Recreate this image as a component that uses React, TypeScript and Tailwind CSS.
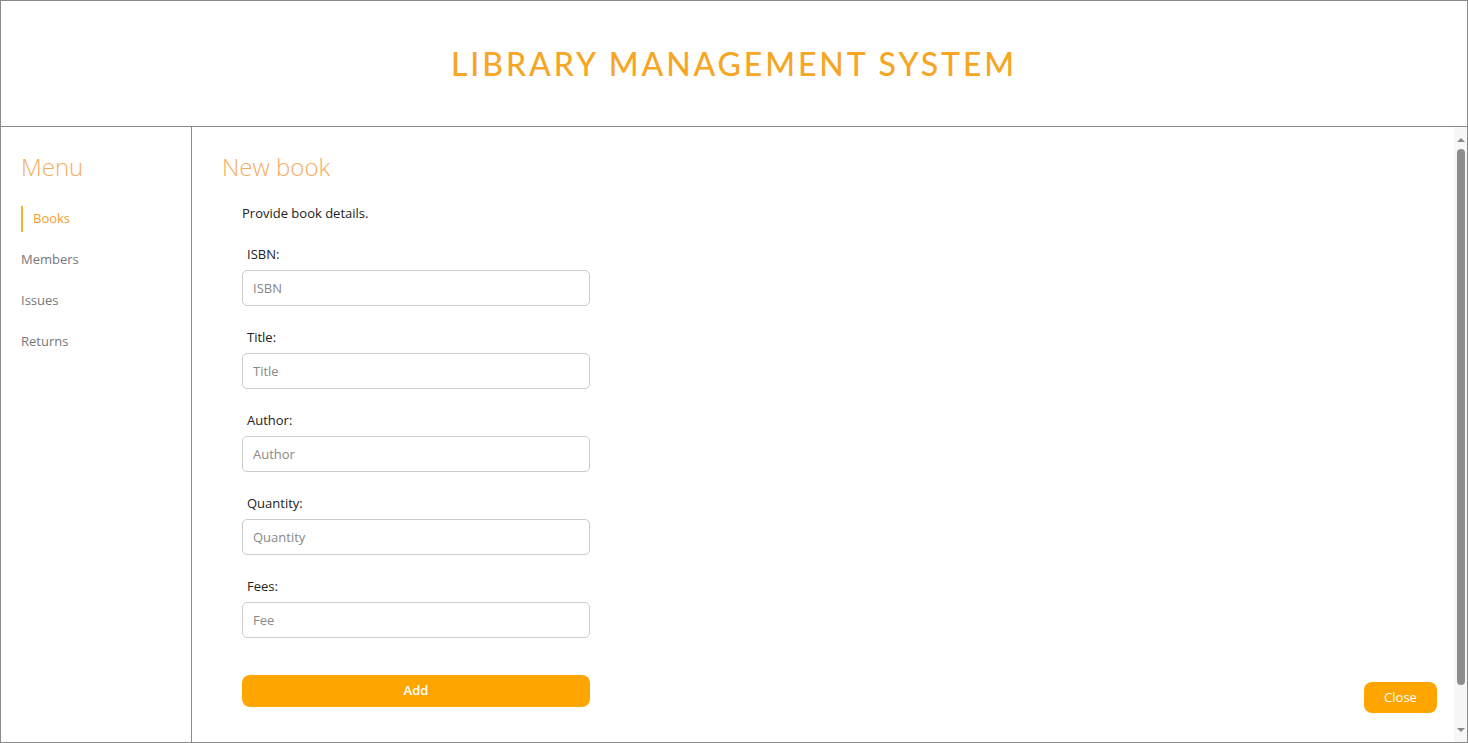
const fields = [
  { label: "ISBN:", placeholder: "ISBN" },
  { label: "Title:", placeholder: "Title" },
  { label: "Author:", placeholder: "Author" },
  { label: "Quantity:", placeholder: "Quantity" },
  { label: "Fees:", placeholder: "Fee" },
];

const menu = ["Books", "Members", "Issues", "Returns"];

function Scrollbar() {
  return (
    <div className="flex w-[13px] shrink-0 flex-col items-center bg-[#f7f7f7] pt-[11px] pb-[10px]">
      <div className="h-0 w-0 border-x-[4px] border-b-[4px] border-x-transparent border-b-[#8a8a8a]" />
      <div className="mt-[7px] w-[8px] flex-1 rounded-full bg-[#8d8d8d]" />
      <div className="mt-[43px] h-0 w-0 border-x-[4px] border-t-[4px] border-x-transparent border-t-[#8a8a8a]" />
    </div>
  );
}

export default function App() {
  return (
    <div className="flex h-[743px] w-[1468px] flex-col overflow-hidden border border-[#8a8a8a] bg-white font-['Open_Sans',sans-serif]">
      {/* Header */}
      <header className="flex h-[126px] shrink-0 items-center justify-center border-b border-[#8a8a8a]">
        <h1 className="font-['Lato',sans-serif] text-[32px] font-medium tracking-[2.9px] text-[#f6a623]">
          LIBRARY MANAGEMENT SYSTEM
        </h1>
      </header>

      <div className="flex min-h-0 flex-1">
        {/* Sidebar */}
        <aside className="w-[191px] shrink-0 border-r border-[#8a8a8a] pl-[20px] pt-[22px]">
          <h2 className="text-[24px] font-light text-[#f3ad62]">Menu</h2>
          <nav className="mt-[21px] flex flex-col gap-[15px]">
            {menu.map((item, i) => (
              <a
                key={item}
                className={
                  i === 0
                    ? "flex h-[26px] items-center border-l-2 border-[#f0b429] pl-[10px] text-[13px] text-[#f0a030]"
                    : "flex h-[26px] items-center text-[13px] text-[#777]"
                }
              >
                {item}
              </a>
            ))}
          </nav>
        </aside>

        {/* Content */}
        <main className="flex min-w-0 flex-1">
          <div className="flex flex-1 justify-between pl-[30px] pr-[17px] pt-[22px]">
            <div>
              <h2 className="text-[24px] font-light text-[#f3ad62]">New book</h2>
              <div className="pl-[20px] pt-[19px]">
                <p className="text-[13px] text-[#222]">Provide book details.</p>
                <form className="mt-[19px] flex w-[348px] flex-col gap-[20px]">
                  {fields.map((f) => (
                    <div key={f.label} className="flex flex-col">
                      <label className="pl-[5px] text-[13px] leading-[22px] text-[#222]">
                        {f.label}
                      </label>
                      <input
                        placeholder={f.placeholder}
                        className="mt-[5px] h-[36px] rounded-[5px] border border-[#ccc] px-[10px] text-[13px] outline-none placeholder:text-[#888]"
                      />
                    </div>
                  ))}
                  <button
                    type="button"
                    className="mt-[17px] h-[32px] rounded-[8px] bg-[#ffa500] text-[13px] font-semibold text-white"
                  >
                    Add
                  </button>
                </form>
              </div>
            </div>
            <div className="flex items-end pb-[29px]">
              <button
                type="button"
                className="h-[31px] w-[73px] rounded-[8px] bg-[#ffa500] text-[13px] text-white"
              >
                Close
              </button>
            </div>
          </div>
          <Scrollbar />
        </main>
      </div>
    </div>
  );
}
